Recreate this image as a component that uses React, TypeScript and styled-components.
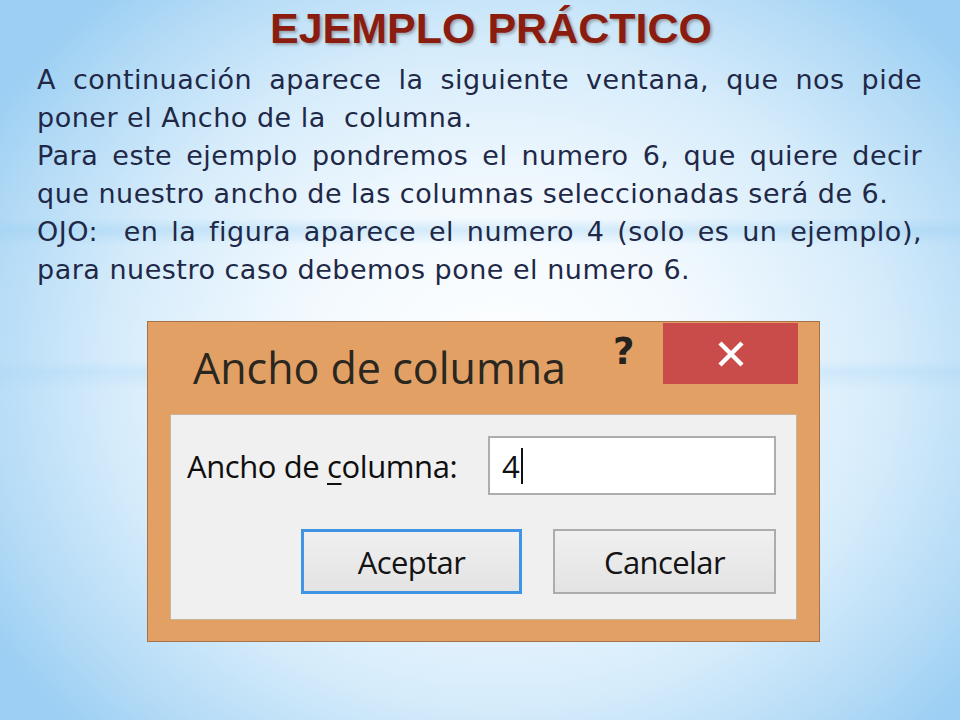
import React from "react";
import styled, {createGlobalStyle} from "styled-components";

const GlobalStyle = createGlobalStyle`
  html, body {
    margin: 0;
    padding: 0;
  }
  body {
    width: 960px;
    height: 720px;
    overflow: hidden;
  }
`

const Slide = styled.div`
  width: 960px;
  height: 720px;
  box-sizing: border-box;
  padding-top: 4px;
  background:
    linear-gradient(180deg, transparent 0, transparent 218px, rgba(150, 205, 242, 0.35) 230px, transparent 245px, transparent 360px, rgba(160, 210, 245, 0.25) 372px, transparent 390px),
    radial-gradient(ellipse 62% 70% at 52% 52%, #ffffff 0%, #f2f9fe 35%, #d6ecfb 65%, #b2daf6 88%, #9ccff3 100%);
  display: flex;
  flex-direction: column;
`

const Title = styled.h1`
  margin: 0;
  padding-left: 22px;
  font-family: "Liberation Sans", Arial, sans-serif;
  font-weight: 700;
  font-size: 43px;
  line-height: 48px;
  letter-spacing: 0;
  text-align: center;
  color: #8b1d10;
  text-shadow: 2px 2px 3px rgba(60, 40, 30, 0.35);
`

const Body = styled.div`
  margin-top: 9px;
  padding: 0 38px 0 37px;
  font-family: "DejaVu Sans", sans-serif;
  font-size: 27px;
  line-height: 38px;
  letter-spacing: 0.5px;
  color: #1f2947;
`

const Line = styled.div<{ $justify?: boolean }>`
  white-space: nowrap;
  text-align: ${p => p.$justify ? "justify" : "left"};
  text-align-last: ${p => p.$justify ? "justify" : "left"};
`

const Stage = styled.div`
  display: flex;
  padding-left: 147px;
  margin-top: 32px;
`

const Dialog = styled.div`
  width: 673px;
  height: 321px;
  box-sizing: border-box;
  background: #e3a064;
  border: 1px solid #a87248;
  display: flex;
  flex-direction: column;
  align-items: center;
`

const TitleBar = styled.div`
  width: 100%;
  height: 92px;
  display: flex;
  align-items: flex-start;
  box-sizing: border-box;
  padding-left: 45px;
  padding-right: 21px;
`

const WindowTitle = styled.div`
  flex: 1;
  padding-top: 16px;
  font-family: "Open Sans", "Noto Sans", sans-serif;
  font-size: 43px;
  line-height: 60px;
  color: #2a2720;
`

const Help = styled.div`
  width: 40px;
  padding-top: 8px;
  margin-right: 10px;
  font-family: "DejaVu Sans", sans-serif;
  font-weight: 700;
  font-size: 37px;
  line-height: 44px;
  color: #23221f;
`

const Close = styled.div`
  width: 135px;
  height: 61px;
  margin-top: 1px;
  background: #c94b4a;
  display: flex;
  align-items: center;
  justify-content: center;
`

const Panel = styled.div`
  width: 627px;
  height: 206px;
  box-sizing: border-box;
  background: #f0f0f0;
  border: 1px solid #c9b39a;
  display: flex;
  flex-direction: column;
  padding: 21px 20px 0 16px;
`

const FieldRow = styled.div`
  display: flex;
  align-items: center;
  justify-content: space-between;
`

const Label = styled.label`
  font-family: "Open Sans", "Noto Sans", sans-serif;
  font-size: 31px;
  letter-spacing: -0.4px;
  color: #0e0e0e;
  u {
    text-decoration-thickness: 2px;
    text-underline-offset: 5px;
  }
`

const Input = styled.div`
  width: 288px;
  height: 59px;
  box-sizing: border-box;
  background: #fff;
  border: 2px solid #adadad;
  display: flex;
  align-items: center;
  padding-left: 12px;
  font-family: "Open Sans", "Noto Sans", sans-serif;
  font-size: 31px;
  color: #111;
`

const Caret = styled.span`
  display: inline-block;
  width: 2px;
  height: 36px;
  margin-left: 1px;
  background: #111;
`

const Buttons = styled.div`
  display: flex;
  justify-content: flex-end;
  gap: 31px;
  margin-top: 34px;
`

const Button = styled.div<{ $primary?: boolean }>`
  width: ${p => p.$primary ? 221 : 223}px;
  height: 65px;
  box-sizing: border-box;
  border: ${p => p.$primary ? "3px solid #3f95e4" : "2px solid #acacac"};
  background: linear-gradient(180deg, #f0f0f0 0%, #e3e3e3 100%);
  display: flex;
  align-items: center;
  justify-content: center;
  font-family: "Open Sans", "Noto Sans", sans-serif;
  font-size: 31px;
  letter-spacing: -0.6px;
  color: #141414;
`

export default function App() {
    return <>
        <GlobalStyle/>
        <Slide>
            <Title>EJEMPLO PRÁCTICO</Title>
            <Body>
                <Line $justify>A continuación aparece la siguiente ventana, que nos pide</Line>
                <Line>poner el Ancho de la&nbsp; columna.</Line>
                <Line $justify>Para este ejemplo pondremos el numero 6, que quiere decir</Line>
                <Line>que nuestro ancho de las columnas seleccionadas será de 6.</Line>
                <Line $justify>OJO:&nbsp; en la figura aparece el numero 4 (solo es un ejemplo),</Line>
                <Line>para nuestro caso debemos pone el numero 6.</Line>
            </Body>
            <Stage>
                <Dialog>
                    <TitleBar>
                        <WindowTitle>Ancho de columna</WindowTitle>
                        <Help>?</Help>
                        <Close>
                            <svg width="30" height="30" viewBox="0 0 30 30">
                                <path d="M4 4 L26 26 M26 4 L4 26" stroke="#fff" strokeWidth="4.5"/>
                            </svg>
                        </Close>
                    </TitleBar>
                    <Panel>
                        <FieldRow>
                            <Label>Ancho de <u>c</u>olumna:</Label>
                            <Input>4<Caret/></Input>
                        </FieldRow>
                        <Buttons>
                            <Button $primary>Aceptar</Button>
                            <Button>Cancelar</Button>
                        </Buttons>
                    </Panel>
                </Dialog>
            </Stage>
        </Slide>
    </>
}
